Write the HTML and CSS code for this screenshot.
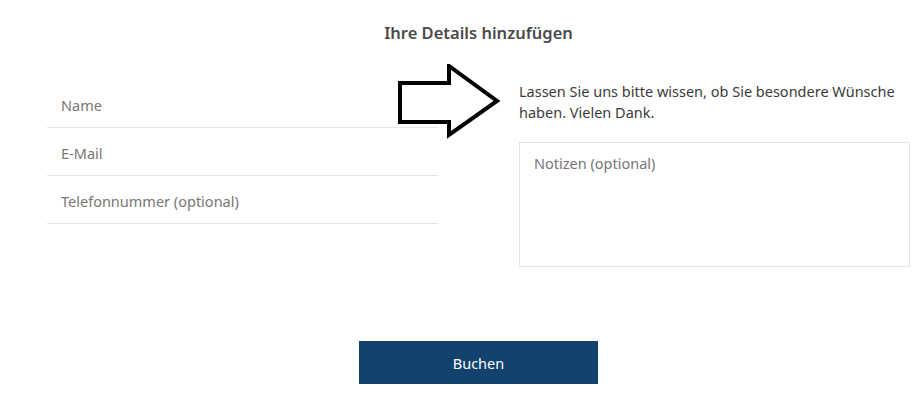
FILE: index.html
```html
<!DOCTYPE html>
<html lang="de">
<head>
<meta charset="utf-8">
<link rel="stylesheet" href="styles.css">
</head>
<body>
<div class="page">
  <h2 class="title">Ihre Details hinzufügen</h2>
  <div class="columns">
    <div class="fields">
      <div class="field">Name</div>
      <div class="field">E-Mail</div>
      <div class="field">Telefonnummer (optional)</div>
    </div>
    <div class="notes">
      <p class="hint">Lassen Sie uns bitte wissen, ob Sie besondere Wünsche haben. Vielen Dank.</p>
      <div class="textarea">Notizen (optional)</div>
    </div>
  </div>
  <div class="actions">
    <button class="btn">Buchen</button>
  </div>
  <svg class="arrow" width="110" height="76" viewBox="0 0 110 76">
    <polygon points="4,19 53,19 53,2 101,37 53,71 53,58 4,58" fill="#fff" stroke="#000" stroke-width="4" stroke-linejoin="miter"/>
  </svg>
</div>
</body>
</html>
```
FILE: styles.css
```css
* { box-sizing: border-box; }
html, body { margin: 0; padding: 0; background: #fff; }
body { font-family: "Noto Sans", "Open Sans", sans-serif; font-size: 14.5px; color: #333; }
.page { position: relative; width: 920px; height: 402px; padding: 0 10px 0 47px; }
.title {
  margin: 0;
  padding-top: 22px;
  text-align: center;
  font-size: 16.5px;
  font-weight: 600;
  color: #4a4a4a;
  line-height: 22px;
}
.columns {
  display: flex;
  gap: 81px;
  padding-top: 36px;
}
.fields { width: 391px; }
.field {
  height: 48px;
  padding: 2px 14px 0;
  display: flex;
  align-items: center;
  border-bottom: 1px solid #e6e6e6;
  color: #7a7576;
}
.notes { width: 391px; }
.hint {
  margin: 0;
  padding-top: 1px;
  line-height: 21px;
  color: #3b3b3b;
}
.textarea {
  margin-top: 19px;
  height: 125px;
  border: 1px solid #e4e4e4;
  padding: 10px 14px;
  color: #7a7576;
}
.actions {
  display: flex;
  justify-content: center;
  padding-top: 74px;
}
.btn {
  width: 239px;
  height: 43px;
  border: 0;
  background: #13426e;
  color: #fff;
  font-family: inherit;
  font-size: 14.5px;
}
.arrow { position: absolute; left: 396px; top: 64px; }
```
